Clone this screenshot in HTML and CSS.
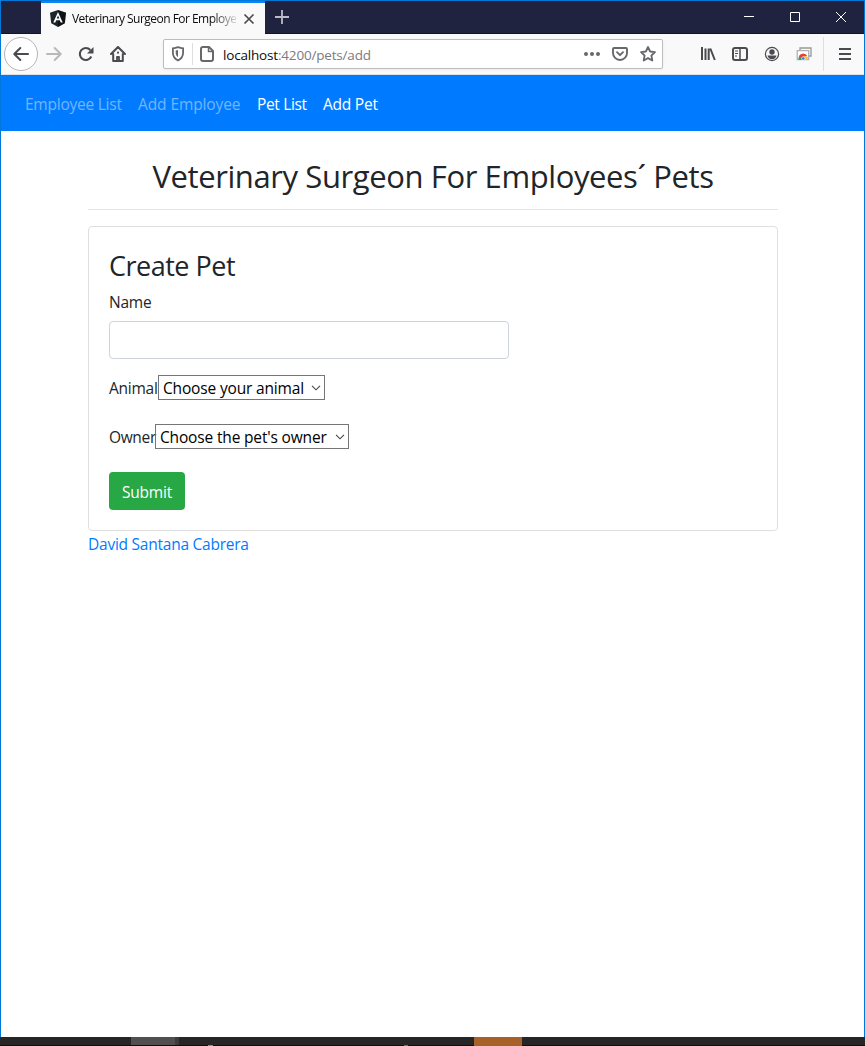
FILE: index.html
```html
<!DOCTYPE html>
<html lang="en">
<head>
<meta charset="utf-8">
<title>Veterinary Surgeon For Employees´ Pets</title>
<link rel="stylesheet" href="styles.css">
</head>
<body>
<div class="window">
  <header class="titlebar">
    <div class="tab">
      <svg class="tab-logo" width="16" height="17" viewBox="0 0 16 17"><path fill="#1b242d" d="M8 0l8 2.7-1.2 10.5L8 17l-6.8-3.8L0 2.7z"/><path fill="#000" d="M8 0l8 2.7-1.2 10.5L8 17z" opacity=".5"/><path fill="#fff" fill-rule="evenodd" d="M8 2l4.7 10.6h-2l-.9-2.3H6.200l-.9 2.300h-2zM8 5.500L6.700 8.600h2.600z"/></svg>
      <span class="tab-title">Veterinary Surgeon For Employe</span>
      <svg class="tab-close" width="12" height="12" viewBox="0 0 12 12" fill="none" stroke="#4a4a4f" stroke-width="1.7"><path d="M1.500 1.500l9 9M10.500 1.500l-9 9"/></svg>
    </div>
    <svg class="new-tab" width="14" height="14" viewBox="0 0 14 14" stroke="#bcbcc4" stroke-width="1.800"><path d="M7 0v14M0 7h14"/></svg>
    <div class="window-buttons">
      <svg width="12" height="12" viewBox="0 0 12 12" stroke="#fff"><path d="M1 5.500h10"/></svg>
      <svg width="12" height="12" viewBox="0 0 12 12" fill="none" stroke="#fff"><path d="M1.500 1.500h9v9h-9z"/></svg>
      <svg width="12" height="12" viewBox="0 0 12 12" stroke="#fff"><path d="M1 1l10 10M11 1L1 11"/></svg>
    </div>
  </header>
  <div class="toolbar">
    <div class="back"><svg width="16" height="16" viewBox="0 0 16 16" fill="none" stroke="#4a4a4f" stroke-width="2" stroke-linecap="round" stroke-linejoin="round"><path d="M15 8H1.500M7.300 2L1.300 8l6 6"/></svg></div>
    <svg class="forward" width="16" height="16" viewBox="0 0 16 16" fill="none" stroke="#b9b9bb" stroke-width="2" stroke-linecap="round" stroke-linejoin="round"><path d="M1 8h13.500M8.700 2l6 6-6 6"/></svg>
    <svg class="reload" width="16" height="16" viewBox="0 0 16 16" fill="none" stroke="#4a4a4f" stroke-width="2.100"><path d="M13.300 10.500A6 6 0 1 1 12.300 4"/><path fill="#4a4a4f" stroke="none" d="M15.500 1v6.500H9z"/></svg>
    <svg class="home" width="16" height="16" viewBox="0 0 16 16" fill="none" stroke="#4a4a4f" stroke-width="2" stroke-linecap="round" stroke-linejoin="round"><path d="M1 8l7-7 7 7M3.200 8v7h9.600V8"/><path d="M7 15v-4h2v4" stroke-width="1.800"/><path d="M8 6.500v.3"/></svg>
    <div class="address">
      <svg class="shield" width="14" height="16" viewBox="0 0 14 16" fill="none" stroke="#68686c" stroke-width="1.800"><path d="M7 1.200c2 .8 3.700 1.100 5.100 1.200v4.400c0 3.500-1.900 6.100-5.100 7.700-3.200-1.600-5.100-4.200-5.100-7.700V2.400C3.300 2.300 5 2 7 1.200z"/><path fill="#68686c" stroke="none" d="M7 4v7.300C5.400 10 4.700 8.700 4.700 6.800V4.500z"/></svg>
      <span class="address-rule"></span>
      <svg class="page-icon" width="14" height="16" viewBox="0 0 14 16" fill="none" stroke="#68686c" stroke-width="2" stroke-linejoin="round"><path d="M3 1h6l4 4v8a2 2 0 0 1-2 2H3a2 2 0 0 1-2-2V3a2 2 0 0 1 2-2z"/><path d="M8.500 1v4.500H13" stroke-width="1.500"/></svg>
      <span class="url"><b>localhost</b>:4200/pets/add</span>
      <svg class="dots" width="16" height="4" viewBox="0 0 16 4" fill="#68686c"><circle cx="2" cy="2" r="2"/><circle cx="8" cy="2" r="2"/><circle cx="14" cy="2" r="2"/></svg>
      <svg class="pocket" width="16" height="14" viewBox="0 0 16 14" fill="none" stroke="#68686c" stroke-width="1.900" stroke-linecap="round" stroke-linejoin="round"><path d="M2 1h12a1 1 0 0 1 1 1v4a7 7 0 0 1-14 0V2a1 1 0 0 1 1-1z"/><path d="M5 5.200l3 3 3-3"/></svg>
      <svg class="star" width="16" height="16" viewBox="0 0 16 16" fill="none" stroke="#68686c" stroke-width="1.800" stroke-linejoin="round"><path d="M8 1l2.100 4.500 4.900.6-3.600 3.400.9 5L8 12.100l-4.300 2.400.9-5L1 6.100l4.900-.6z"/></svg>
    </div>
    <div class="tools">
      <svg width="16" height="16" viewBox="0 0 16 16" fill="none" stroke="#4a4a4f" stroke-width="2"><path d="M2 1v13M5.500 2.500V14M8.700 2.500V14M10.300 2.500l4.500 11.500"/></svg>
      <svg width="16" height="16" viewBox="0 0 16 16" fill="none" stroke="#4a4a4f" stroke-width="2"><rect x="1" y="2" width="14" height="12" rx="2"/><path d="M8 2v12" stroke-width="1.500"/><path d="M3 5h3M3 7.500h3M3 10h2" stroke-width="1"/></svg>
      <svg width="16" height="16" viewBox="0 0 16 16" fill="none" stroke="#4a4a4f" stroke-width="1.200"><circle cx="8" cy="8" r="6.600"/><circle cx="8" cy="6" r="2.700" fill="#4a4a4f" stroke="none"/><path d="M3.500 9.500h9c-.5 2.200-2 3.800-4.500 3.800s-4-1.600-4.500-3.800z" fill="#4a4a4f" stroke="none"/></svg>
      <svg width="16" height="16" viewBox="0 0 16 16" fill="none"><path d="M4 5V2h11v8h-2" stroke="#999" stroke-width="1.300"/><path d="M1.200 4.700h11.500v8.800H1.200z" fill="#fff" stroke="#b2b2b2" stroke-width="1.300"/><path d="M2.800 14a4.500 4.500 0 0 1 .7-4.500L7 14z" fill="#31a852"/><path d="M3 10a4.600 4.600 0 0 1 8.300 0l-4.300 1-2 1.500z" fill="#e84033"/><path d="M7 10.500h4.500c.5 1.200.5 2.500 0 3.500H7z" fill="#fbc32c"/><circle cx="7.200" cy="12.500" r="1.700" fill="#3979e8" stroke="#fff" stroke-width=".6"/></svg>
    </div>
    <div class="menu"><svg width="12" height="12" viewBox="0 0 12 12" stroke="#4a4a4f" stroke-width="2"><path d="M0 1h12M0 6h12M0 11h12"/></svg></div>
  </div>
  <nav class="navbar">
    <a class="muted link-employees">Employee List</a>
    <a class="muted link-add-employee">Add Employee</a>
    <a class="link-pets">Pet List</a>
    <a class="link-add-pet">Add Pet</a>
  </nav>
  <main class="container">
    <h1>Veterinary Surgeon For Employees´ Pets</h1>
    <section class="card">
      <h2>Create Pet</h2>
      <label class="name-label" for="name">Name</label>
      <input class="name-input" id="name" type="text">
      <div class="row"><span class="animal-label">Animal</span><div class="select animal"><span>Choose your animal</span><svg width="10" height="6" viewBox="0 0 10 6" fill="none" stroke="#444" stroke-width="1.100"><path d="M1 .8l4 4 4-4"/></svg></div></div>
      <div class="row"><span class="owner-label">Owner</span><div class="select owner"><span>Choose the pet's owner</span><svg width="10" height="6" viewBox="0 0 10 6" fill="none" stroke="#444" stroke-width="1.100"><path d="M1 .8l4 4 4-4"/></svg></div></div>
      <button class="submit" type="button">Submit</button>
    </section>
    <a class="author">David Santana Cabrera</a>
  </main>
</div>
<footer class="taskbar"><i class="task-active"></i><i class="task-edge"></i><i class="task-folder"></i><i class="task-app"></i><i class="task-alert"></i></footer>
</body>
</html>
```
FILE: styles.css
```css
* { box-sizing: border-box; }
body { margin: 0; height: 1046px; display: flex; flex-direction: column; overflow: hidden; background: #fff; color: #212529; font: 15.5px/24px "Open Sans", "Noto Sans", sans-serif; letter-spacing: -.24px; }
svg { display: block; flex: none; }
.window { flex: 1; border: 1px solid #0078d7; border-bottom: 0; }
.titlebar { height: 33px; display: flex; background: #202340; border-bottom: 1px solid #160f30; }
.tab { width: 224px; height: 33px; margin-left: 40px; padding: 0 11px 0 9px; display: flex; align-items: center; border-top: 2px solid #0a84ff; background: #f9f9fa; }
.tab-title { width: 166px; margin: 0 7px 0 6px; white-space: nowrap; color: #0c0c0d; font-size: 12px; letter-spacing: -.53px; -webkit-mask-image: linear-gradient(90deg, #000 140px, transparent 168px); mask-image: linear-gradient(90deg, #000 140px, transparent 168px); }
.new-tab { margin: 9px 0 0 10px; }
.window-buttons { display: flex; gap: 34px; margin: 10px 17px 0 auto; }
.toolbar { height: 41px; display: flex; align-items: center; border-bottom: 1px solid #e0e0e1; background: #f9f9fa; }
.back { width: 34px; height: 34px; margin-left: 3px; display: grid; place-items: center; border: 1px solid #b5b5b6; border-radius: 50%; background: #fff; }
.forward { margin-left: 8px; }
.reload { margin-left: 16px; }
.home { margin-left: 16px; }
.address { width: 500px; height: 30px; margin-left: 37px; padding: 0 6px 0 7px; display: flex; align-items: center; border: 1px solid #bdbdbe; border-radius: 2px; background: #fff; box-shadow: 0 1px 3px rgba(0,0,0,.06); }
.address-rule { width: 1px; height: 22px; margin: 0 7px; background: #dededf; }
.url { margin: 1px auto 0 9px; color: #7b7b7e; font-size: 13.5px; letter-spacing: -.18px; }
.url b { color: #0c0c0d; font-weight: 400; }
.pocket { margin: 0 12px; }
.tools { display: flex; gap: 16px; margin-left: 37px; }
.menu { height: 34px; margin-left: 11px; padding-left: 15px; display: flex; align-items: center; border-left: 1px solid #dedee0; }
.navbar { height: 56px; padding: 2px 24px 0; display: flex; align-items: center; gap: 16px; background: #007bff; color: #fff; white-space: nowrap; }
.muted { color: rgba(255,255,255,.45); }
.link-employees { width: 97px; }
.link-add-employee { width: 103px; letter-spacing: -.1px; }
.link-pets { width: 50px; letter-spacing: -.35px; }
.container { width: 690px; margin: 0 auto 0 87px; }
h1, h2 { margin: 0; font-weight: 400; white-space: nowrap; }
h1 { height: 79px; padding-top: 25px; border-bottom: 1px solid #e5e5e5; text-align: center; font-size: 31px; line-height: 40px; letter-spacing: -.4px; }
.card { height: 305px; margin-top: 16px; padding: 22px 20px 20px; border: 1px solid #dfdfdf; border-radius: 4px; }
h2 { font-size: 27px; line-height: 34px; letter-spacing: -.5px; }
.name-label { display: block; margin-top: 7px; }
.name-input { display: block; width: 400px; height: 38px; margin-top: 7px; padding: 6px 12px; border: 1px solid #ced4da; border-radius: 4px; font: inherit; }
.row { height: 25px; margin-top: 16px; display: flex; align-items: center; white-space: nowrap; }
.row + .row { margin-top: 24px; }
.row > span { padding-top: 1px; }
.animal-label { width: 49px; }
.owner-label { width: 46px; letter-spacing: -.35px; }
.select { height: 25px; padding: 1px 3px 0 4px; display: flex; align-items: center; justify-content: space-between; border: 1px solid #767676; color: #000; letter-spacing: -.16px; }
.animal { width: 167px; }
.owner { width: 194px; }
.submit { display: block; width: 76px; height: 38px; margin-top: 23px; padding: 1px 0 0; border: 0; border-radius: 4px; background: #28a745; color: #fff; font: inherit; letter-spacing: -.24px; }
.author { display: inline-block; margin-top: 1px; color: #007bff; }
.taskbar { height: 9px; display: flex; align-items: flex-end; background: #262626; border-bottom: 1px solid #0b0e12; }
.task-active { width: 44px; height: 8px; margin-left: 131px; background: #505050; }
.task-edge { width: 4px; height: 8px; background: #3d3d3d; }
.task-folder { width: 5px; height: 1px; margin: 0 0 -1px 29px; background: #a89233; }
.task-app { width: 4px; height: 1px; margin: 0 0 -1px 191px; background: #3187ad; }
.task-alert { width: 48px; height: 9px; margin: 0 0 -1px 66px; background: #a86128; }
```
